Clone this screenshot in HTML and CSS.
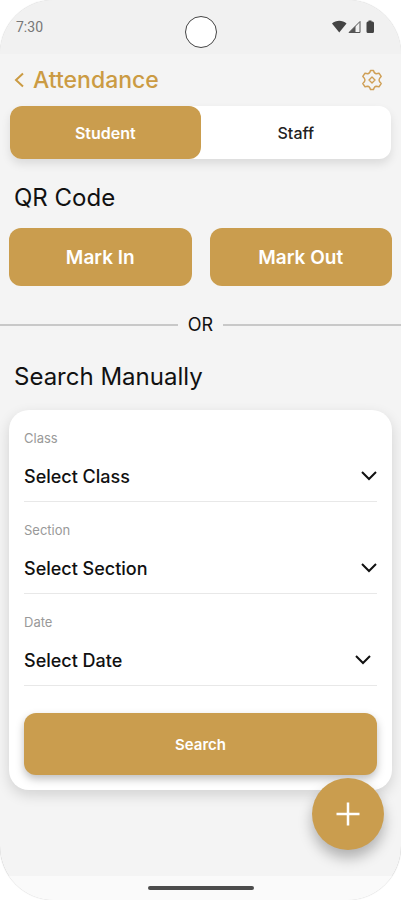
FILE: index.html
```html
<!DOCTYPE html>
<html lang="en">
<head>
    <meta charset="UTF-8">
    <meta name="viewport" content="width=device-width, initial-scale=1.0">
    <title>Attendance</title>
    <link rel="stylesheet" href="styles.css">
</head>
<body>
    <div class="phone">
        <div class="status-bar">
            <span class="time">7:30</span>
            <span class="camera"></span>
            <svg class="status-icons" width="44" height="14" viewBox="0 0 44 14" aria-hidden="true">
                <path d="M0 3.5C4-.3 10.500-.3 14.500 3.500L7.250 12.500Z" fill="#444"/>
                <path d="M17 12.500L28 1.500V12.500Z" fill="none" stroke="#555" stroke-width="1"/>
                <path d="M17 12.500L23.500 6V12.500Z" fill="#555"/>
                <path d="M36.500 1.500V.5H39.500V1.500H40.500Q42 1.500 42 3V11.500Q42 13 40.500 13H36Q34.500 13 34.500 11.500V3Q34.500 1.500 36 1.500Z" fill="#444"/>
            </svg>
        </div>

        <header class="header">
            <button type="button" class="icon-button" aria-label="Back">
                <svg width="12" height="16" viewBox="0 0 12 16" fill="none" stroke="#cb9b43" stroke-width="2">
                    <path d="M11 1.500L4 8L11 14.500"/>
                </svg>
            </button>
            <h1>Attendance</h1>
            <button type="button" class="icon-button" aria-label="Settings">
                <svg width="22" height="22" viewBox="0 0 22 22" fill="none" stroke="#cf9f55" stroke-width="1.400" stroke-linejoin="round">
                    <path d="M9.500 1.500H12.500Q13.300 4.700 15.200 4.800L18 4.200L20.200 7.500Q18 9.500 18 11Q18 12.500 20.200 14.500L18 17.800L15.200 17.200Q13.300 17.300 12.500 20.500H9.500Q8.700 17.300 6.800 17.200L4 17.800L1.800 14.500Q4 12.500 4 11Q4 9.500 1.800 7.500L4 4.200L6.800 4.800Q8.700 4.700 9.500 1.500Z"/>
                    <path d="M11 8L14 11L11 14L8 11Z"/>
                </svg>
            </button>
        </header>

        <main class="content">
            <div class="tabs">
                <button type="button" class="tab active">Student</button>
                <button type="button" class="tab">Staff</button>
            </div>

            <h2>QR Code</h2>
            <div class="mark-buttons">
                <button type="button" class="btn">Mark In</button>
                <button type="button" class="btn">Mark Out</button>
            </div>

            <div class="divider">OR</div>

            <h2>Search Manually</h2>
            <form class="card">
                <div class="field">
                    <label for="class">Class</label>
                    <div class="select-box">
                        <select id="class" name="class">
                            <option>Select Class</option>
                        </select>
                        <svg class="chevron" width="16" height="10" viewBox="0 0 16 10"><path d="M1 1L8 8L15 1"/></svg>
                    </div>
                </div>
                <div class="field">
                    <label for="section">Section</label>
                    <div class="select-box">
                        <select id="section" name="section">
                            <option>Select Section</option>
                        </select>
                        <svg class="chevron" width="16" height="10" viewBox="0 0 16 10"><path d="M1 1L8 8L15 1"/></svg>
                    </div>
                </div>
                <div class="field date-field">
                    <label for="date">Date</label>
                    <div class="select-box">
                        <select id="date" name="date">
                            <option>Select Date</option>
                        </select>
                        <svg class="chevron" width="16" height="10" viewBox="0 0 16 10"><path d="M1 1L8 8L15 1"/></svg>
                    </div>
                </div>
                <button type="button" class="btn search-btn">Search</button>
            </form>
        </main>

        <div class="nav-bar"><span class="nav-handle"></span></div>

        <button type="button" class="fab" aria-label="Add">
            <svg width="24" height="24" viewBox="0 0 24 24" stroke="#fff" stroke-width="2.500">
                <path d="M12 .5V23.500M.5 12H23.500"/>
            </svg>
        </button>
    </div>
</body>
</html>
```
FILE: styles.css
```css
* {
    box-sizing: border-box;
}
body {
    margin: 0;
    background-color: #fff;
    font-family: Inter, "Liberation Sans", Arial, sans-serif;
    color: #111;
}
button, select {
    font-family: inherit;
    border: none;
    padding: 0;
    cursor: pointer;
}
.phone {
    position: relative;
    display: flex;
    flex-direction: column;
    min-height: 100vh;
    background-color: #f4f4f4;
    border-radius: 54px;
    overflow: hidden;
    box-shadow: 0 0 1px #aaa;
}

/* status bar */
.status-bar {
    display: grid;
    grid-template-columns: 1fr auto 1fr;
    height: 54px;
    padding: 16px 25px 0 16px;
    background-color: #f1f1f1;
}
.time {
    font-family: Roboto, sans-serif;
    font-size: 14px;
    line-height: 22px;
    color: #777;
}
.camera {
    width: 32px;
    height: 32px;
    margin-left: 9px;
    background-color: #fff;
    border: 1px solid #444;
    border-radius: 50%;
}
.status-icons {
    justify-self: end;
    margin-top: 4px;
}

/* header */
.header {
    display: flex;
    align-items: center;
    height: 52px;
    padding: 0 18px 0 12px;
}
.header h1 {
    flex: 1;
    margin: 0 0 0 9px;
    font-size: 23px;
    font-weight: 500;
    line-height: 28px;
    color: #cb9b43;
}
.icon-button {
    display: flex;
    background: none;
}

.content {
    flex: 1;
    padding: 0 9px 40px;
}
.tabs {
    display: flex;
    margin: 0 1px;
    background-color: #fff;
    border-radius: 12px;
    box-shadow: 0 5px 10px rgba(0, 0, 0, 0.1);
}
.tab {
    flex: 1;
    height: 53px;
    background: none;
    border-radius: 12px;
    font-size: 16px;
    font-weight: 500;
    color: #222;
}
.tab.active {
    background-color: #ca9d4e;
    font-weight: 600;
    color: #fff;
}
h2 {
    margin: 23px 5px 15px;
    font-size: 24px;
    font-weight: 400;
    line-height: 31px;
}
.mark-buttons {
    display: flex;
    gap: 18px;
}
.btn {
    flex: 1;
    height: 58px;
    background-color: #ca9d4e;
    border-radius: 12px;
    font-size: 19px;
    font-weight: 600;
    color: #fff;
}
.divider {
    display: flex;
    align-items: center;
    gap: 10px;
    margin: 26px -9px 0;
    font-size: 18px;
    line-height: 26px;
}
.divider::before,
.divider::after {
    content: "";
    flex: 1;
    height: 2px;
    background-color: #c8c8c8;
}

/* search form */
.card {
    margin-top: 18px;
    padding: 0 15px 15px;
    background-color: #fff;
    border-radius: 20px;
    box-shadow: 0 5px 14px rgba(0, 0, 0, 0.14);
}
.field {
    padding-top: 20px;
    border-bottom: 1px solid #e8e8e8;
}
.field label {
    display: block;
    margin-bottom: 5px;
    font-size: 13px;
    line-height: 16px;
    color: #999;
}
.select-box {
    display: grid;
    align-items: center;
}
.select-box select,
.chevron {
    grid-area: 1 / 1;
}
.select-box select {
    appearance: none;
    width: 100%;
    height: 50px;
    background: none;
    font-size: 18px;
    font-weight: 500;
    color: #111;
}
.chevron {
    justify-self: end;
    fill: none;
    stroke: #111;
    stroke-width: 2;
    pointer-events: none;
}
.date-field .chevron {
    margin-right: 6px;
}
.search-btn {
    display: block;
    width: 100%;
    height: 62px;
    margin-top: 27px;
    font-size: 15px;
    box-shadow: 0 4px 8px rgba(0, 0, 0, 0.25);
}

.nav-bar {
    display: flex;
    align-items: center;
    justify-content: center;
    height: 24px;
    background-color: #fafafa;
}
.nav-handle {
    width: 106px;
    height: 4px;
    background-color: #4c4c4c;
    border-radius: 2px;
}
.fab {
    position: absolute;
    right: 17px;
    bottom: 50px;
    display: flex;
    align-items: center;
    justify-content: center;
    width: 72px;
    height: 72px;
    background-color: #ca9d4e;
    border-radius: 50%;
    box-shadow: 0 8px 14px rgba(0, 0, 0, 0.28);
}
```
